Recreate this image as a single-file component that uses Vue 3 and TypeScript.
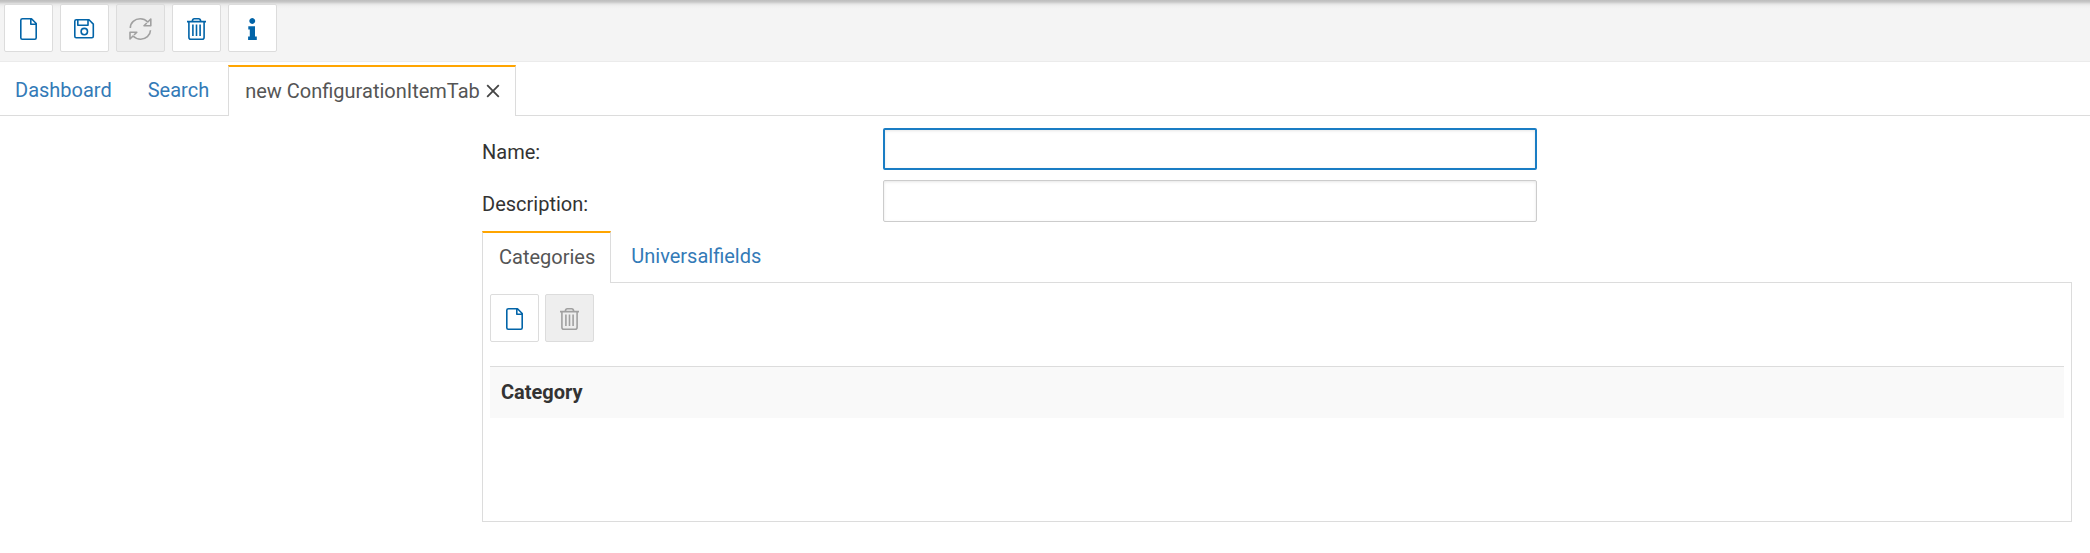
<script setup lang="ts">
import { ref } from 'vue'

type IconName = 'file' | 'save' | 'refresh' | 'trash' | 'info'
interface Action { icon: IconName; label: string; disabled?: boolean }
interface Field { id: string; label: string }

const icons: Record<IconName, string> = {
  file: 'M6.5 3.8H15.5L20.2 8.5V22.8Q20.2 24.2 18.8 24.2H6.2Q4.8 24.2 4.8 22.8V5.3Q4.8 3.8 6.5 3.8ZM14.8 4V9.2H20',
  save: 'M4.3 4.8H17L21.3 9.1V21.3Q21.3 22.7 19.9 22.7H4.2Q2.8 22.7 2.8 21.3V6.3Q2.8 4.8 4.3 4.8ZM5.8 5V10.3H16V5M15.5 16.6A3.2 3.2 0 1 1 9.1 16.6A3.2 3.2 0 1 1 15.5 16.6',
  refresh: 'M2.3 13C2.3 7.5 6.8 3.8 12.3 3.8C15.6 3.8 17.8 5 19.8 7L22.8 4V10.8H16L18.8 8M22.5 15.3C22.3 20.5 17.8 24.2 12.7 24.2C9.4 24.2 7 23 5 21L2 24V17.2H8.8L6 20',
  trash: 'M3 6.6H22M8.3 6.2Q8.6 3.7 10.3 3.7H14.7Q16.4 3.7 16.7 6.2M4.9 7V22.2Q4.9 24.2 6.7 24.2H18.3Q20.1 24.2 20.1 22.2V7M8.9 9.5V21M12.5 9.5V21M16.1 9.5V21',
  info: 'M12.3 3.1A2.9 2.9 0 1 1 12.2 3.1ZM8.3 11.2H15V21.6H16.8V25H8.1V21.6H9.8V14.5H8.3Z',
}

const mainActions: Action[] = [
  { icon: 'file', label: 'New' },
  { icon: 'save', label: 'Save' },
  { icon: 'refresh', label: 'Refresh', disabled: true },
  { icon: 'trash', label: 'Delete' },
  { icon: 'info', label: 'Information' },
]
const categoryActions: Action[] = [
  { icon: 'file', label: 'Add category' },
  { icon: 'trash', label: 'Remove category', disabled: true },
]
const fields: Field[] = [
  { id: 'name', label: 'Name:' },
  { id: 'description', label: 'Description:' },
]
const values = ref<Record<string, string>>({ name: '', description: '' })
const activeField = ref('name')
</script>

<template>
  <div class="page">
    <header class="toolbar">
      <button
        v-for="action in mainActions"
        :key="action.icon"
        type="button"
        class="tool"
        :disabled="action.disabled"
        :aria-label="action.label"
      >
        <svg class="icon" :class="{ 'icon--solid': action.icon === 'info' }" viewBox="0 0 25 26" aria-hidden="true">
          <path :d="icons[action.icon]" />
        </svg>
      </button>
    </header>

    <nav class="tabs tabs--main">
      <a href="#dashboard" class="tab">Dashboard</a>
      <a href="#search" class="tab">Search</a>
      <div class="tab tab--active">
        <span>new ConfigurationItemTab</span>
        <button type="button" class="close" aria-label="Close tab">
          <svg viewBox="0 0 14 14" aria-hidden="true"><path d="M1.2 1.2L12.8 12.8M12.8 1.2L1.2 12.8" /></svg>
        </button>
      </div>
    </nav>

    <main class="layout">
      <div class="editor">
        <form class="form" @submit.prevent>
          <div v-for="field in fields" :key="field.id" class="row">
            <label :for="field.id">{{ field.label }}</label>
            <input
              :id="field.id"
              v-model="values[field.id]"
              type="text"
              :class="{ current: activeField === field.id }"
              @focus="activeField = field.id"
            />
          </div>
        </form>

        <nav class="tabs tabs--inner">
          <a href="#categories" class="tab tab--active">Categories</a>
          <a href="#universalfields" class="tab">Universalfields</a>
        </nav>
        <section class="panel">
          <div class="panel-tools">
            <button
              v-for="action in categoryActions"
              :key="action.icon"
              type="button"
              class="tool"
              :disabled="action.disabled"
              :aria-label="action.label"
            >
              <svg class="icon" viewBox="0 0 25 26" aria-hidden="true"><path :d="icons[action.icon]" /></svg>
            </button>
          </div>
          <table class="grid">
            <thead>
              <tr><th scope="col">Category</th></tr>
            </thead>
          </table>
        </section>
      </div>
    </main>
  </div>
</template>

<style>
body {
  margin: 0;
  background: #fff;
}
</style>

<style scoped>
.page {
  font: 20px/28px Roboto, "Liberation Sans", sans-serif;
  color: #333;
}
.toolbar {
  display: flex;
  gap: 7px;
  padding: 4px 4px 9px;
  border-bottom: 1px solid #ebebeb;
  background: linear-gradient(#bdbdbd 0, #c8c8c8 2px, #e4e4e4 4px, #f0f0f0 6px, #f4f4f4 9px);
}
.tool {
  box-sizing: border-box;
  display: flex;
  align-items: center;
  justify-content: center;
  width: 49px;
  height: 48px;
  padding: 0;
  border: 1px solid #dcdcdc;
  border-radius: 2px;
  background: #fff;
  color: #0264a8;
}
.tool:disabled {
  background: #eee;
  color: #a0a0a0;
}
.icon {
  width: 25px;
  height: 26px;
  fill: none;
  stroke: currentColor;
  stroke-width: 1.6;
  stroke-linejoin: round;
}
.icon--solid {
  fill: currentColor;
  stroke: none;
}
.tabs {
  display: flex;
  gap: 3px;
}
.tabs--main {
  margin-top: 3px;
  border-bottom: 1px solid #dcdcdc;
}
.tab {
  display: flex;
  align-items: flex-start;
  padding: 10px 15px 11px 16px;
  border: 1px solid transparent;
  border-bottom: 0;
  color: #337ab7;
  text-decoration: none;
}
.tabs--main .tab {
  margin-bottom: -1px;
}
.tabs--main .tab:first-child {
  padding-left: 14px;
}
.tab--active {
  border-color: #dcdcdc;
  border-top: 2px solid #ffa500;
  background: #fff;
  color: #555;
}
.close {
  display: flex;
  align-self: center;
  margin-left: 6px;
  padding: 0;
  border: 0;
  background: none;
  color: #444;
}
.close svg {
  width: 14px;
  height: 14px;
  fill: none;
  stroke: currentColor;
  stroke-width: 1.8;
}
.layout {
  display: grid;
  grid-template-columns: 482fr 1590fr 18fr;
}
.editor {
  grid-column: 2;
  padding-top: 12px;
}
.form {
  display: grid;
  gap: 10px;
}
.row {
  display: grid;
  grid-template-columns: 401fr 654fr 535fr;
}
.row label {
  padding-top: 10px;
}
.row input {
  box-sizing: border-box;
  width: 100%;
  height: 42px;
  padding: 6px 12px;
  border: 1px solid #ccc;
  border-radius: 2px;
  outline: 0;
  background: #fff;
  box-shadow: inset 0 1px 3px rgba(0, 0, 0, 0.1);
  color: #333;
  font: inherit;
}
.row input.current {
  border: 2px solid #1a7dc4;
}
.tabs--inner {
  margin-top: 9px;
}
.tabs--inner .tab {
  margin-bottom: -1px;
  padding-bottom: 12px;
}
.tabs--inner .tab--active {
  z-index: 1;
}
.panel {
  min-height: 220px;
  padding: 11px 7px 7px;
  border: 1px solid #dcdcdc;
}
.panel-tools {
  display: flex;
  gap: 6px;
}
.grid {
  width: 100%;
  margin-top: 24px;
  border-collapse: separate;
  border-spacing: 0;
}
.grid th {
  padding: 11px 11px 12px;
  border-top: 1px solid #dcdcdc;
  background: #f9f9f9;
  text-align: left;
  font-weight: 700;
}
</style>
